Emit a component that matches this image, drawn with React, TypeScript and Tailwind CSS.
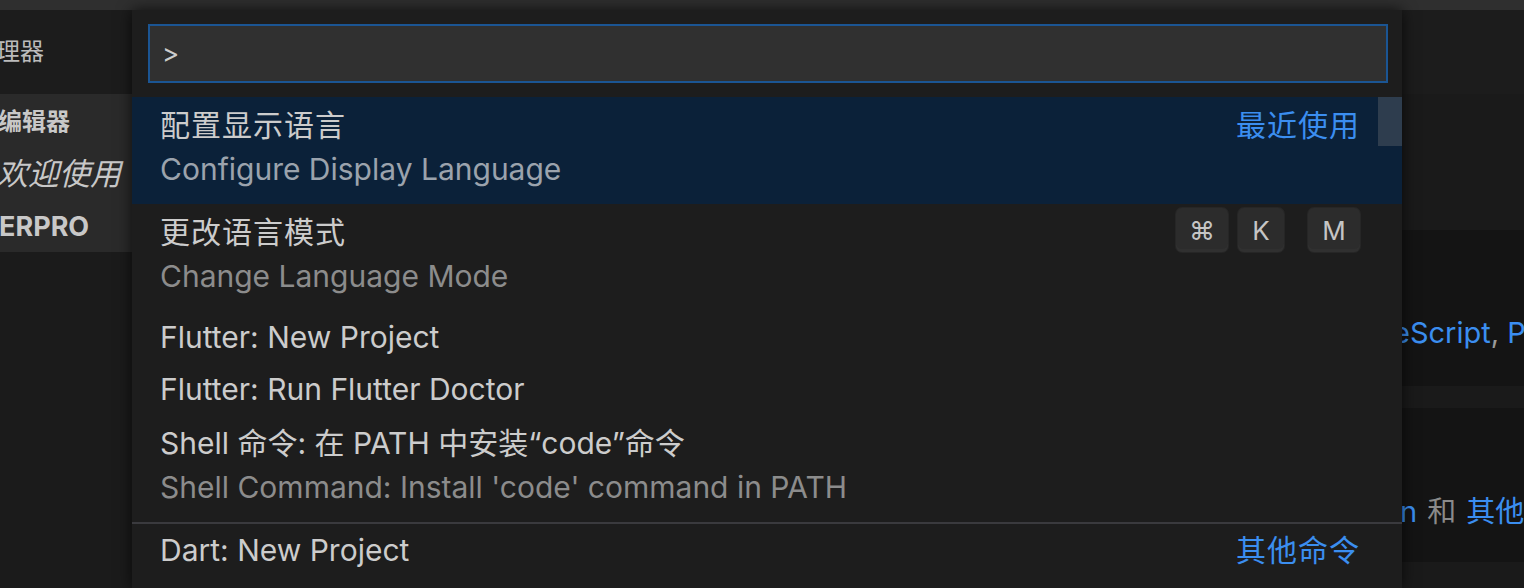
const rows = [
  {
    title: '配置显示语言',
    desc: 'Configure Display Language',
    label: '最近使用',
    selected: true,
    cjk: true,
  },
  {
    title: '更改语言模式',
    desc: 'Change Language Mode',
    keys: true,
    cjk: true,
  },
  { title: 'Flutter: New Project' },
  { title: 'Flutter: Run Flutter Doctor' },
  {
    title: 'Shell 命令: 在 PATH 中安装“code”命令',
    desc: "Shell Command: Install 'code' command in PATH",
  },
]

function Key({ children, className = '' }: { children: React.ReactNode; className?: string }) {
  return (
    <span
      className={`flex h-[44px] items-center justify-center rounded-[6px] bg-[#2c2c2c] text-[26px] text-[#c5c5c5] shadow-[inset_0_-3px_0_#303030,0_0_0_1px_#262626] ${className}`}
    >
      {children}
    </span>
  )
}

function Sidebar() {
  return (
    <div className="flex w-[132px] shrink-0 flex-col overflow-hidden bg-[#1b1b1b]">
      <div className="flex h-[84px] items-center whitespace-nowrap bg-[#1c1c1c] text-[24px] text-[#bbbbbb]">
        <span className="-ml-[76px]">资源管理器</span>
      </div>
      <div className="flex h-[158px] flex-col whitespace-nowrap bg-[#2a2a2a] text-[#c8c8c8]">
        <div className="flex h-[56px] items-center text-[24px] font-bold">
          <span className="-ml-[74px]">打开的编辑器</span>
        </div>
        <div className="flex h-[48px] items-center text-[31px] italic">
          <span className="-ml-[3px]">欢迎使用</span>
        </div>
        <div className="flex h-[54px] items-center pt-[4px] text-[27px] font-bold">
          <span className="-ml-[1px]">ERPRO</span>
        </div>
      </div>
    </div>
  )
}

function Editor() {
  return (
    <div className="flex min-w-0 flex-1 flex-col overflow-hidden whitespace-nowrap bg-[#1a1a1a]">
      <div className="h-[84px] bg-[#1c1c1c]" />
      <div className="h-[136px]" />
      <div className="flex h-[156px] items-center bg-[#141414] pl-[1261px] pt-[50px] text-[29px]">
        <span className="text-[#3b8ef0]">eScript</span>
        <span className="text-[#9a9a9a]">,&nbsp;</span>
        <span className="text-[#3b8ef0]">PHP</span>
      </div>
      <div className="h-[22px]" />
      <div className="flex h-[154px] items-center bg-[#141414] pl-[1268px] pt-[54px] text-[29px]">
        <span className="text-[#3b8ef0]">n</span>
        <span className="px-[10px] text-[#8a8a8a]">和</span>
        <span className="text-[#3b8ef0]">其他编辑器</span>
      </div>
      <div className="flex-1" />
    </div>
  )
}

function Palette() {
  return (
    <div className="absolute bottom-0 left-[132px] top-[10px] flex w-[1270px] flex-col bg-[#1d1d1d] shadow-[0_0_14px_rgba(0,0,0,0.7)]">
      <div className="pl-[16px] pr-[14px] pt-[14px]">
        <div className="flex h-[59px] items-center border-2 border-[#1b5593] bg-[#303030] px-[12px] text-[26px] text-[#cccccc]">
          &gt;
        </div>
      </div>
      <div className="relative mt-[14px] flex flex-col">
        {rows.map((row, i) => (
          <div
            key={i}
            className={`flex flex-col pl-[28px] pr-[42px] ${row.desc ? 'h-[107px] pt-[6px]' : 'h-[52px] justify-center'} ${
              row.selected ? 'bg-[#0b2139]' : ''
            }`}
          >
            <div className="flex h-[44px] items-center justify-between">
              <span className={`text-[30px] text-[#cccccc] ${row.cjk ? 'tracking-[1px]' : ''}`}>{row.title}</span>
              {row.label && <span className="text-[30px] tracking-[1px] text-[#3b8ef0]">{row.label}</span>}
              {row.keys && (
                <div className="-mt-[4px] flex items-center">
                  <Key className="w-[52px]">⌘</Key>
                  <Key className="ml-[10px] w-[46px]">K</Key>
                  <Key className="ml-[24px] w-[52px]">M</Key>
                </div>
              )}
            </div>
            {row.desc && (
              <div className="flex h-[44px] items-center">
                <span className={`text-[30px] ${row.selected ? 'text-[#9ba3ad]' : 'text-[#8c8c8c]'}`}>{row.desc}</span>
              </div>
            )}
          </div>
        ))}
        <div className="h-[2px] bg-[#3a3a3e]" />
        <div className="flex h-[52px] items-center justify-between pl-[28px] pr-[42px]">
          <span className="text-[30px] text-[#cccccc]">Dart: New Project</span>
          <span className="text-[30px] tracking-[1px] text-[#3b8ef0]">其他命令</span>
        </div>
        <div className="absolute right-0 top-0 h-[49px] w-[24px] bg-[#2e3d4e]" />
      </div>
    </div>
  )
}

export default function App() {
  return (
    <div className="relative flex h-[588px] w-full flex-col overflow-hidden bg-[#1a1a1a] font-['Inter','Noto_Sans_CJK_SC',sans-serif]">
      <div className="h-[10px] shrink-0 bg-[#2f2f2f]" />
      <div className="flex min-h-0 flex-1">
        <Sidebar />
        <Editor />
      </div>
      <Palette />
    </div>
  )
}
